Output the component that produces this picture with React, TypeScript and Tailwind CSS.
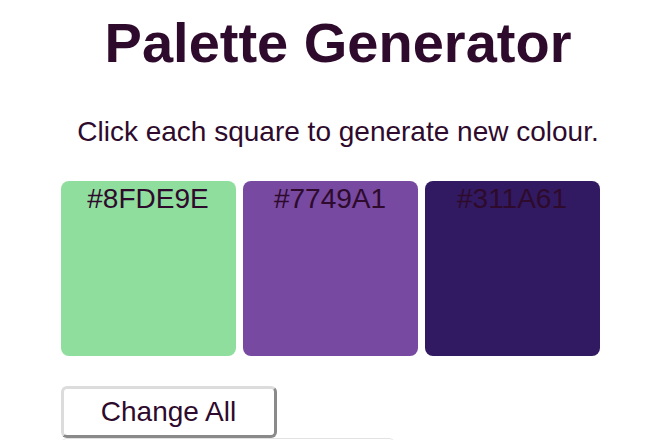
import React, { useState } from 'react';

const INITIAL = ['#8FDE9E', '#7749A1', '#311A61'];

const randomHex = () =>
    '#' + Math.floor(Math.random() * 0xffffff).toString(16).padStart(6, '0').toUpperCase();

export default function App() {
    const [colours, setColours] = useState<string[]>(INITIAL);

    const changeOne = (i: number) => {
        setColours((prev) => prev.map((c, j) => (j === i ? randomHex() : c)));
    };

    const changeAll = () => setColours((prev) => prev.map(() => randomHex()));

    return (
        <div className="w-[660px] h-[440px] overflow-hidden bg-white text-[#2e0a2c] font-['Liberation_Sans',Arial,sans-serif]">
            <div className="w-[539px] mx-auto">
                {/* heading */}
                <h1 className="pt-[11px] pl-[16px] text-center text-[56px] leading-[64px] font-bold">
                    Palette Generator
                </h1>
                <p className="mt-[41px] pl-[16px] text-center text-[28px] leading-[32px]">
                    Click each square to generate new colour.
                </p>

                {/* swatches */}
                <div className="mt-[33px] grid grid-cols-3 gap-[7px]">
                    {colours.map((c, i) => (
                        <button
                            key={i}
                            onClick={() => changeOne(i)}
                            className="h-[175px] rounded-[8px] flex justify-center items-start pt-[2px] text-[28px] leading-[32px] text-[#2e0a2c]"
                            style={{ backgroundColor: c }}
                        >
                            {c}
                        </button>
                    ))}
                </div>

                <div className="mt-[30px] flex flex-col items-start">
                    <button
                        onClick={changeAll}
                        className="w-[216px] h-[52px] bg-white rounded-[6px] border-[3px] border-t-[#dcdcdc] border-l-[#dcdcdc] border-r-[#8a8a8a] border-b-[#8a8a8a] text-[28px] leading-[32px] text-[#2e0a2c]"
                    >
                        Change All
                    </button>
                    <div className="w-[334px] h-[20px] rounded-[6px] border-t border-[#e2e2e2]" />
                </div>
            </div>
        </div>
    );
}
